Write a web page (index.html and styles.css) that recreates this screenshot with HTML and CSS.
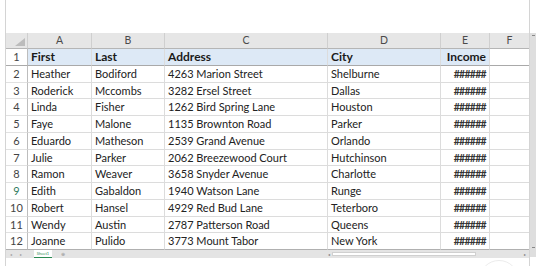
FILE: index.html
```html
<!DOCTYPE html>
<html lang="en">
<head>
    <meta charset="UTF-8">
    <meta name="viewport" content="width=device-width, initial-scale=1.0">
    <title>Sheet1</title>
    <link rel="stylesheet" href="styles.css">
</head>
<body>
    <div class="frame">
        <div class="window">
            <div class="top"></div>

            <div class="sheet">
                <!-- column letters -->
                <div class="corner">
                    <svg width="10" height="8" viewBox="0 0 10 8"><polygon points="10,0 10,8 0,8" fill="#bcbcbc"/></svg>
                </div>
                <div class="col">A</div>
                <div class="col">B</div>
                <div class="col">C</div>
                <div class="col">D</div>
                <div class="col">E</div>
                <div class="col last">F</div>

                <!-- row 1: headings -->
                <div class="num head-row">1</div>
                <div class="cell title head-row">First</div>
                <div class="cell title head-row">Last</div>
                <div class="cell title head-row">Address</div>
                <div class="cell title head-row">City</div>
                <div class="cell title right head-row">Income</div>
                <div class="cell blank head-row"></div>

                <div class="num">2</div>
                <div class="cell">Heather</div>
                <div class="cell">Bodiford</div>
                <div class="cell">4263 Marion Street</div>
                <div class="cell">Shelburne</div>
                <div class="cell hash">######</div>
                <div class="cell blank"></div>

                <div class="num">3</div>
                <div class="cell">Roderick</div>
                <div class="cell">Mccombs</div>
                <div class="cell">3282 Ersel Street</div>
                <div class="cell">Dallas</div>
                <div class="cell hash">######</div>
                <div class="cell blank"></div>

                <div class="num">4</div>
                <div class="cell">Linda</div>
                <div class="cell">Fisher</div>
                <div class="cell">1262 Bird Spring Lane</div>
                <div class="cell">Houston</div>
                <div class="cell hash">######</div>
                <div class="cell blank"></div>

                <div class="num">5</div>
                <div class="cell">Faye</div>
                <div class="cell">Malone</div>
                <div class="cell">1135 Brownton Road</div>
                <div class="cell">Parker</div>
                <div class="cell hash">######</div>
                <div class="cell blank"></div>

                <div class="num">6</div>
                <div class="cell">Eduardo</div>
                <div class="cell">Matheson</div>
                <div class="cell">2539 Grand Avenue</div>
                <div class="cell">Orlando</div>
                <div class="cell hash">######</div>
                <div class="cell blank"></div>

                <div class="num">7</div>
                <div class="cell">Julie</div>
                <div class="cell">Parker</div>
                <div class="cell">2062 Breezewood Court</div>
                <div class="cell">Hutchinson</div>
                <div class="cell hash">######</div>
                <div class="cell blank"></div>

                <div class="num">8</div>
                <div class="cell">Ramon</div>
                <div class="cell">Weaver</div>
                <div class="cell">3658 Snyder Avenue</div>
                <div class="cell">Charlotte</div>
                <div class="cell hash">######</div>
                <div class="cell blank"></div>

                <div class="num active">9</div>
                <div class="cell">Edith</div>
                <div class="cell">Gabaldon</div>
                <div class="cell">1940 Watson Lane</div>
                <div class="cell">Runge</div>
                <div class="cell hash">######</div>
                <div class="cell blank"></div>

                <div class="num">10</div>
                <div class="cell">Robert</div>
                <div class="cell">Hansel</div>
                <div class="cell">4929 Red Bud Lane</div>
                <div class="cell">Teterboro</div>
                <div class="cell hash">######</div>
                <div class="cell blank"></div>

                <div class="num">11</div>
                <div class="cell">Wendy</div>
                <div class="cell">Austin</div>
                <div class="cell">2787 Patterson Road</div>
                <div class="cell">Queens</div>
                <div class="cell hash">######</div>
                <div class="cell blank"></div>

                <div class="num end">12</div>
                <div class="cell end">Joanne</div>
                <div class="cell end">Pulido</div>
                <div class="cell end">3773 Mount Tabor</div>
                <div class="cell end">New York</div>
                <div class="cell hash end">######</div>
                <div class="cell blank end"></div>
            </div>

            <div class="tabs">
                <span class="nav">&#9666;</span>
                <span class="nav">&#9656;</span>
                <span class="tab">Sheet1</span>
                <span class="plus">&#8853;</span>
                <div class="hscroll">
                    <span class="mark">&#9666;</span>
                    <div class="thumb"></div>
                    <span class="mark end-mark">&#9656;</span>
                </div>
            </div>
        </div>

        <div class="vscroll">
            <span class="tick"></span>
            <span class="tick"></span>
        </div>

        <div class="ring"></div>
    </div>
</body>
</html>
```

FILE: styles.css
```css
* {
    box-sizing: border-box;
}

body {
    margin: 0;
    background-color: #fff;
    font-family: Lato, "Open Sans", sans-serif;
    color: #222;
    overflow: hidden;
}

.frame {
    display: flex;
    height: 266px;
    position: relative;
    overflow: hidden;
}

.window {
    margin-left: 5px;
    width: 525px;
    border-left: 1px solid #d4d4d4;
    border-right: 1px solid #d4d4d4;
    display: flex;
    flex-direction: column;
}

.top {
    height: 33px;
}

.sheet {
    display: grid;
    grid-template-columns: 22px 64px 73px 163px 113px 49px 39px;
    grid-template-rows: 16px repeat(12, 16.75px);
}

.corner, .col {
    background-color: #e6e6e6;
    border-right: 1px solid #cfcfcf;
    border-bottom: 1px solid #b5b5b5;
}

.corner {
    display: flex;
    justify-content: flex-end;
    align-items: flex-end;
    padding: 0 2px 2px 0;
}

.col {
    font-size: 10.5px;
    color: #4a4a4a;
    text-align: center;
    line-height: 15px;
}

.col.last {
    border-right: none;
}

.num {
    font-size: 11px;
    text-align: center;
    line-height: 16px;
    color: #444;
    border-right: 1px solid #bdbdbd;
    border-bottom: 1px solid #e1e1e1;
}

.num.active {
    color: #2f7a60;
}

.cell {
    font-size: 11px;
    line-height: 16px;
    padding-left: 3px;
    white-space: nowrap;
    overflow: hidden;
    border-right: 1px solid #dcdcdc;
    border-bottom: 1px solid #dcdcdc;
}

.cell.blank {
    border-right: none;
}

.title {
    font-size: 12px;
    font-weight: bold;
    color: #1a1a1a;
    background-color: #dde9f6;
}

.head-row {
    border-bottom-color: #a9a9a9;
}

.right, .hash {
    text-align: right;
    padding-left: 0;
    padding-right: 3px;
}

.hash {
    letter-spacing: -0.7px;
    font-size: 10.5px;
    font-weight: bold;
    color: #333;
}

.end {
    border-bottom-color: #b0b0b0;
}

.tabs {
    height: 8px;
    background-color: #e4e4e4;
    display: flex;
    align-items: center;
    font-size: 4px;
    color: #999;
}

.nav {
    margin-left: 4px;
    width: 6px;
}

.tab {
    margin-left: 8px;
    width: 18px;
    height: 8px;
    background-color: #fff;
    color: #2a8a52;
    text-align: center;
    line-height: 7px;
    border-bottom: 1px solid #2a8a52;
}

.plus {
    margin-left: 9px;
    font-size: 5px;
}

.hscroll {
    margin-left: auto;
    width: 201px;
    height: 8px;
    display: flex;
    align-items: center;
}

.mark {
    width: 4px;
    font-size: 4px;
    color: #777;
}

.thumb {
    width: 144px;
    height: 4px;
    background-color: #fff;
    border: 1px solid #d0d0d0;
}

.end-mark {
    margin-left: auto;
    margin-right: 1px;
}

.vscroll {
    margin-top: 33px;
    width: 6px;
    height: 224px;
    background-color: #dedede;
    display: flex;
    flex-direction: column;
    justify-content: space-between;
    padding: 2px 1px 9px 2px;
}

.tick {
    display: block;
    height: 1px;
    width: 3px;
    background-color: #888;
}

.ring {
    position: absolute;
    left: 479px;
    top: 260px;
    width: 40px;
    height: 40px;
    border: 1px solid #ececec;
    border-radius: 50%;
}
```
